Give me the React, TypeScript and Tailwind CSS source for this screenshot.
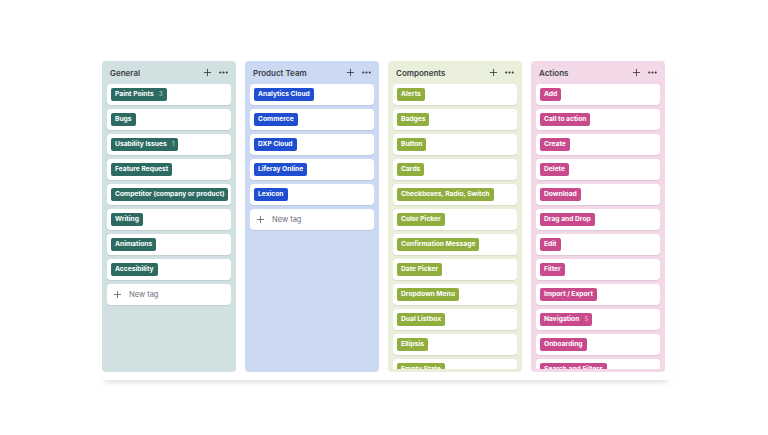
import { Plus, MoreHorizontal } from 'lucide-react';

interface Tag {
  label: string;
  count?: number;
}

interface Column {
  title: string;
  bg: string;
  tag: string;
  countColor: string;
  tags: Tag[];
  newTag?: boolean;
}

const columns: Column[] = [
  {
    title: 'General',
    bg: 'bg-[#d1e0e0]',
    tag: 'bg-[#2c6a62]',
    countColor: 'text-[#9cc7c0]',
    newTag: true,
    tags: [
      { label: 'Paint Points', count: 3 },
      { label: 'Bugs' },
      { label: 'Usability Issues', count: 1 },
      { label: 'Feature Request' },
      { label: 'Competitor (company or product)' },
      { label: 'Writing' },
      { label: 'Animations' },
      { label: 'Accesibility' },
    ],
  },
  {
    title: 'Product Team',
    bg: 'bg-[#ccd9f3]',
    tag: 'bg-[#1f4fd0]',
    countColor: 'text-[#9db4ef]',
    newTag: true,
    tags: [
      { label: 'Analytics Cloud' },
      { label: 'Commerce' },
      { label: 'DXP Cloud' },
      { label: 'Liferay Online' },
      { label: 'Lexicon' },
    ],
  },
  {
    title: 'Components',
    bg: 'bg-[#e9efda]',
    tag: 'bg-[#8fae3d]',
    countColor: 'text-[#d3e2a8]',
    tags: [
      { label: 'Alerts' },
      { label: 'Badges' },
      { label: 'Button' },
      { label: 'Cards' },
      { label: 'Checkboxes, Radio, Switch' },
      { label: 'Color Picker' },
      { label: 'Confirmation Message' },
      { label: 'Date Picker' },
      { label: 'Dropdown Menu' },
      { label: 'Dual Listbox' },
      { label: 'Ellipsis' },
      { label: 'Empty State' },
    ],
  },
  {
    title: 'Actions',
    bg: 'bg-[#f3d8e8]',
    tag: 'bg-[#c94a8c]',
    countColor: 'text-[#eba7cb]',
    tags: [
      { label: 'Add' },
      { label: 'Call to action' },
      { label: 'Create' },
      { label: 'Delete' },
      { label: 'Download' },
      { label: 'Drag and Drop' },
      { label: 'Edit' },
      { label: 'Filter' },
      { label: 'Import / Export' },
      { label: 'Navigation', count: 5 },
      { label: 'Onboarding' },
      { label: 'Search and Filters' },
    ],
  },
];

function TagCard({ tag, color, countColor }: { tag: Tag; color: string; countColor: string }) {
  return (
    <div className="flex h-[21px] shrink-0 items-center rounded-[4px] bg-white px-[4px] shadow-[0_1px_1px_rgba(0,0,0,0.08)]">
      <span
        className={`flex h-[13px] items-center gap-[5px] whitespace-nowrap rounded-[2px] px-[4px] text-[6.7px] font-bold leading-none text-white ${color}`}
      >
        {tag.label}
        {tag.count !== undefined && <span className={`font-medium ${countColor}`}>{tag.count}</span>}
      </span>
    </div>
  );
}

function BoardColumn({ col }: { col: Column }) {
  return (
    <div className={`flex h-[311px] w-[134px] shrink-0 flex-col rounded-[4px] px-[5px] pb-[3px] ${col.bg}`}>
      <div className="flex h-[23px] shrink-0 items-center justify-between pl-[3px] pr-[2px]">
        <span className="text-[8px] font-semibold text-[#3a4045]">{col.title}</span>
        <div className="flex items-center gap-[5px] text-[#2a2e33]">
          <Plus size={11} strokeWidth={1.7} />
          <MoreHorizontal size={11} strokeWidth={2.6} />
        </div>
      </div>
      <div className="flex min-h-0 flex-1 flex-col gap-[4px] overflow-hidden">
        {col.tags.map((t) => (
          <TagCard key={t.label} tag={t} color={col.tag} countColor={col.countColor} />
        ))}
        {col.newTag && (
          <div className="flex h-[21px] shrink-0 items-center gap-[6px] rounded-[4px] bg-white px-[5px] text-[7.5px] text-[#6b6f7a] shadow-[0_1px_1px_rgba(0,0,0,0.08)]">
            <Plus size={11} strokeWidth={1.5} className="text-[#3f434a]" />
            New tag
          </div>
        )}
      </div>
    </div>
  );
}

export default function App() {
  return (
    <div
      className="h-[435px] w-[768px] overflow-hidden bg-white pl-[100px] pt-[61px]"
      style={{ fontFamily: 'Inter, "Noto Sans", sans-serif' }}
    >
      <div className="flex w-[572px] gap-[9px] pb-[8px] pl-[2px] shadow-[0_7px_6px_-5px_rgba(0,0,0,0.14)]">
        {columns.map((c) => (
          <BoardColumn key={c.title} col={c} />
        ))}
      </div>
    </div>
  );
}
